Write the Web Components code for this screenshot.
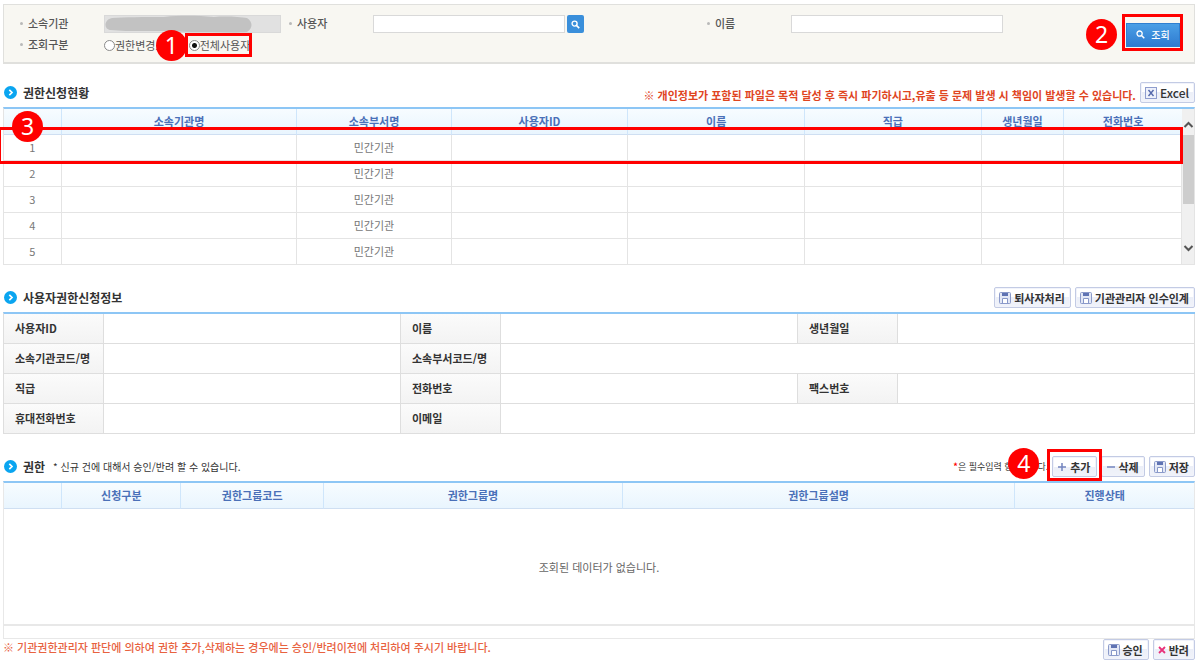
<!DOCTYPE html>
<html lang="ko">
<head>
<meta charset="utf-8">
<title>권한신청현황</title>
<style>
  html, body { margin: 0; background: #fff; }
  body {
    font-family: "Noto Sans CJK KR", "Noto Sans", sans-serif;
    font-size: 11px;
    line-height: 16px;
    color: #333;
  }
</style>
</head>
<body>
<permission-page></permission-page>

<script>
const define = (name, html, setup) => {
  const template = document.createElement('template');
  template.innerHTML = html;
  customElements.define(name, class extends HTMLElement {
    constructor() {
      super();
      this.attachShadow({ mode: 'open' }).append(template.content.cloneNode(true));
    }
    connectedCallback() {
      if (setup) setup(this, this.shadowRoot);
    }
  });
};

const ICONS = {
  save: '<svg width="12" height="12" viewBox="0 0 12 12"><rect x=".5" y=".5" width="11" height="11" rx="1" fill="#e3e8f6" stroke="#8b9aca"/><rect x="3" y="1" width="6" height="3" fill="#5f73b3"/><path d="M3.500 11V6.500h5V11" fill="#fff" stroke="#8797c8"/></svg>',
  excel: '<svg width="12" height="12" viewBox="0 0 12 12"><rect x=".5" y=".5" width="11" height="11" fill="#eef1fb" stroke="#8f9dce"/><path d="M3.500 3l5 6M8.500 3l-5 6" stroke="#5468ab" stroke-width="1.400"/></svg>',
  plus: '<svg width="10" height="12" viewBox="0 0 10 12"><path d="M1 6h8M5 2v8" stroke="#7384be" stroke-width="1.500"/></svg>',
  minus: '<svg width="10" height="12" viewBox="0 0 10 12"><path d="M1 6h8" stroke="#7384be" stroke-width="1.500"/></svg>',
  cross: '<svg width="8" height="12" viewBox="0 0 8 12"><path d="M1 3l6 6M7 3L1 9" stroke="#e8317a" stroke-width="1.800"/></svg>'
};

/* Numbered guide marker: a red frame round the slotted content and a round badge */
define('step-marker', `
  <style>
    :host { display: inline-block; position: relative; --frame: -4px; --x: -30px; --y: -4px; }
    .frame { position: absolute; inset: var(--frame); border: 3px solid #f00; pointer-events: none; z-index: 2; box-sizing: border-box; }
    .badge {
      position: absolute; left: var(--x); top: var(--y); z-index: 3;
      width: 31px; height: 31px; border-radius: 50%;
      background: #f00; color: #fff; text-align: center;
      font: 23px/31px "Noto Sans", sans-serif;
    }
  </style>
  <slot></slot>
  <span class="frame"></span><span class="badge"></span>`,
  (host, root) => { root.querySelector('.badge').textContent = host.getAttribute('step'); });

define('tool-button', `
  <style>
    :host { display: block; }
    button {
      display: flex; align-items: center; gap: 3px; height: 21px; box-sizing: border-box;
      padding: 0 5px 0 4px; border: 1px solid #c3cbe4; border-radius: 2px;
      background: linear-gradient(#fff 50%, #eceff8 50%, #f1f3fa);
      box-shadow: inset 0 0 0 1px #f1f3fb;
      font: bold 11px/16px "Noto Sans CJK KR", sans-serif; color: #333; white-space: nowrap;
    }
    :host([icon=excel]) button { font-weight: 500; font-size: 12px; }
    svg { display: block; }
  </style>
  <button type="button"><span class="icon"></span><slot></slot></button>`,
  (host, root) => { root.querySelector('.icon').innerHTML = ICONS[host.getAttribute('icon')]; });

define('section-head', `
  <style>
    :host { display: flex; align-items: center; gap: 4px; height: 21px; margin: 22px 0 4px; }
    svg { display: block; margin: 0 2px 0 1px; }
    h2 { margin: 0; font-size: 12px; line-height: 18px; font-weight: bold; color: #333; }
    .space { flex: 1; }
  </style>
  <svg width="13" height="13" viewBox="0 0 13 13"><circle cx="6.500" cy="6.500" r="6.500" fill="#0aa5f0"/><path d="M5.300 3.800L8 6.500 5.300 9.200" fill="none" stroke="#fff" stroke-width="1.700"/></svg>
  <h2></h2><slot name="note"></slot><span class="space"></span><slot></slot>`,
  (host, root) => { root.querySelector('h2').textContent = host.getAttribute('heading'); });

define('search-panel', `
  <style>
    :host { display: block; }
    form {
      display: grid; grid-template-columns: 85px 184fr 85px 333fr 85px 335fr 54px;
      grid-template-rows: 18px 18px; row-gap: 3px; align-items: center;
      padding: 10px 14px 8px 15px; background: #f8f7f2;
      border: 1px solid #e0e0dd; border-bottom-width: 2px; color: #555;
    }
    .name { display: flex; align-items: center; gap: 5px; font-weight: 500; padding: 0 0 2px 1px; }
    .name::before { content: ""; width: 3px; height: 3px; border-radius: 50%; background: #b9b9b9; }
    input[type=text] {
      box-sizing: border-box; width: 100%; height: 18px; margin: 0; padding: 0 4px;
      border: 1px solid #d9d9d9; background: #fff; font: inherit;
    }
    .org { position: relative; max-width: 177px; height: 18px; }
    .org input { background: #e1e1e1; display: block; }
    .org svg { position: absolute; left: 0; top: 0; }
    .user { display: flex; gap: 2px; }
    .user input { max-width: 192px; }
    .person { max-width: 212px; }
    .find { width: 17px; height: 18px; flex: none; padding: 0; border: 0; border-radius: 2px; background: #3a8fdb; display: grid; place-items: center; }
    .kinds { display: flex; gap: 13px; white-space: nowrap; }
    .kinds label { display: flex; align-items: center; }
    input[type=radio] { appearance: none; box-sizing: border-box; width: 11px; height: 11px; margin: 0; border: 1px solid #8a8a8a; border-radius: 50%; background: #fff; }
    input[type=radio]:checked { background: radial-gradient(circle, #111 0 2px, #fff 3px); }
    .all { --frame: -4px -2px -4px -4px; --x: -33px; --y: -7px; }
    .go { grid-column: 7; grid-row: 1 / 3; --frame: -9px -3px -4px -4px; --x: -40px; --y: -4px; }
    .submit {
      display: flex; align-items: center; justify-content: center; gap: 6px; width: 54px; height: 24px; padding: 0;
      border: 1px solid #2f7fd0; background: linear-gradient(#4a9fe6, #2f7bd0); color: #fff;
      font: 500 10px/14px "Noto Sans CJK KR", sans-serif;
    }
  </style>
  <form onsubmit="return false">
    <label class="name" for="org">소속기관</label>
    <div class="org"><input id="org" type="text" readonly>
      <svg width="150" height="18" viewBox="0 0 150 18" aria-hidden="true"><path d="M8 3C20 2 40 2 60 2 80 0 95 1 110 2c12-1 26 0 33 1 6 4 6 10 0 14-12 1-35 0-55 0-20-1-35-1-50-1-12 0-22 0-31-1C0 15-1 5 8 3z" fill="#c2c2c2"/></svg>
    </div>
    <label class="name" for="user">사용자</label>
    <div class="user"><input id="user" type="text"><button class="find" type="button" aria-label="사용자 검색"><svg width="9" height="9" viewBox="0 0 9 9"><circle cx="3.600" cy="3.600" r="2.500" fill="none" stroke="#fff" stroke-width="1.400"/><path d="M5.500 5.500L8.200 8.200" stroke="#fff" stroke-width="1.700"/></svg></button></div>
    <label class="name" for="person">이름</label>
    <input class="person" id="person" type="text">
    <step-marker class="go" step="2"><button class="submit" type="submit"><svg width="9" height="9" viewBox="0 0 9 9"><circle cx="3.600" cy="3.600" r="2.600" fill="none" stroke="#fff" stroke-width="1.300"/><path d="M5.500 5.500L8.300 8.300" stroke="#fff" stroke-width="1.500"/></svg>조회</button></step-marker>
    <span class="name">조회구분</span>
    <div class="kinds" role="radiogroup" aria-label="조회구분">
      <label><input type="radio" name="kind">권한변경요청</label>
      <step-marker class="all" step="1"><label><input type="radio" name="kind" checked>전체사용자</label></step-marker>
    </div>
  </form>`);

const GRID_STYLE = `
  table { width: 100%; border-spacing: 0; table-layout: fixed; }
  th, td { box-sizing: border-box; padding: 0 0 2px; text-align: center; }
  th { height: 26px; font-weight: bold; color: #4a70b8; background: linear-gradient(#f7fcff, #e9f5fe); border-right: 1px solid #cfe6fb; border-bottom: 1px solid #cfdff2; }
  th:last-child { border-right: 0; }
`;
const cols = widths => '<colgroup>' + widths.map(w => `<col style="width:${w}%">`).join('') + '</colgroup>';
const heads = names => '<thead><tr>' + names.map(n => n ? `<th scope="col">${n}</th>` : '<th aria-label="번호"></th>').join('') + '</tr></thead>';

define('request-grid', `
  <style>
    :host { display: flex; position: relative; border: 1px solid #e4e4e4; border-top: 2px solid #8dc6f5; }
    ${GRID_STYLE}
    table { flex: 1; min-width: 0; }
    td { height: 26px; color: #777; border-right: 1px solid #e4e4e4; border-bottom: 1px solid #e4e4e4; }
    tbody tr:last-child td { height: 25px; border-bottom: 0; }
    .bar { width: 12px; flex: none; display: flex; flex-direction: column; background: #f0f0f0; }
    .bar button { border: 0; padding: 0; background: none; height: 26px; display: grid; place-items: center; }
    .thumb { height: 69px; background: #cdcdcd; margin-left: 1px; }
    .space { flex: 1; }
    .first { position: absolute; top: 18px; left: -6px; right: 11px; height: 37px; --frame: 0; --x: 14px; --y: -16px; }
  </style>
  <table>${cols([4.9, 20, 13.1, 15, 15, 15, 7, 10])}
    ${heads(['', '소속기관명', '소속부서명', '사용자ID', '이름', '직급', '생년월일', '전화번호'])}
    <tbody>${[1, 2, 3, 4, 5].map(n => `<tr><td>${n}</td><td></td><td>민간기관</td><td></td><td></td><td></td><td></td><td></td></tr>`).join('')}</tbody>
  </table>
  <div class="bar">
    <button type="button" aria-label="위로"><svg width="11" height="14" viewBox="0 0 11 14"><path d="M1.500 12L5.500 8l4 4" fill="none" stroke="#555" stroke-width="2"/></svg></button>
    <div class="thumb"></div><div class="space"></div>
    <button type="button" aria-label="아래로"><svg width="11" height="14" viewBox="0 0 11 14"><path d="M1.500 2L5.500 6l4-4" fill="none" stroke="#555" stroke-width="2"/></svg></button>
  </div>
  <step-marker class="first" step="3"></step-marker>`);

define('user-info', `
  <style>
    :host { display: block; border-top: 2px solid #8dc6f5; border-left: 1px solid #dedede; }
    table { width: 100%; border-spacing: 0; table-layout: fixed; }
    .k { width: 100px; }
    th, td { box-sizing: border-box; height: 30px; padding: 0 0 2px 11px; border-right: 1px solid #dedede; border-bottom: 1px solid #dedede; text-align: left; }
    th { background: linear-gradient(#fbfbfb, #f3f3f3); font-weight: bold; }
  </style>
  <table>
    <colgroup><col class="k"><col><col class="k"><col><col class="k"><col></colgroup>
    <tbody>
      <tr><th scope="row">사용자ID</th><td></td><th scope="row">이름</th><td></td><th scope="row">생년월일</th><td></td></tr>
      <tr><th scope="row">소속기관코드/명</th><td></td><th scope="row">소속부서코드/명</th><td colspan="3"></td></tr>
      <tr><th scope="row">직급</th><td></td><th scope="row">전화번호</th><td></td><th scope="row">팩스번호</th><td></td></tr>
      <tr><th scope="row">휴대전화번호</th><td></td><th scope="row">이메일</th><td colspan="3"></td></tr>
    </tbody>
  </table>`);

define('permission-grid', `
  <style>
    :host { display: block; border: 1px solid #e8e8e8; border-top: 2px solid #8dc6f5; }
    ${GRID_STYLE}
    td { height: 117px; padding: 0; color: #666; border-bottom: 2px solid #e8e8e8; }
    .strip { height: 12px; }
  </style>
  <table>${cols([4.9, 10, 12, 25.1, 33, 15])}
    ${heads(['', '신청구분', '권한그룹코드', '권한그룹명', '권한그룹설명', '진행상태'])}
    <tbody><tr><td colspan="6">조회된 데이터가 없습니다.</td></tr></tbody>
  </table>
  <div class="strip"></div>`);

define('permission-page', `
  <style>
    :host { display: block; padding: 4px 5px 0 3px; }
    .warn { color: #e0451f; font-weight: bold; margin-top: 4px; }
    .top { margin-top: 18px; }
    .note { margin-left: 4px; font-size: 10px; }
    .req { font-size: 9px; }
    .req b { color: #f00; }
    .add { --frame: -7px -5px -4px; --x: -44px; --y: -8px; }
    footer { display: flex; align-items: flex-start; gap: 4px; }
    footer p { flex: 1; margin: 0; color: #e8623f; font-weight: 500; }
  </style>
  <main>
    <search-panel></search-panel>
    <section-head class="top" heading="권한신청현황"><span class="warn">※ 개인정보가 포함된 파일은 목적 달성 후 즉시 파기하시고,유출 등 문제 발생 시 책임이 발생할 수 있습니다.</span><tool-button icon="excel">Excel</tool-button></section-head>
    <request-grid></request-grid>
    <section-head heading="사용자권한신청정보"><tool-button icon="save">퇴사자처리</tool-button><tool-button icon="save">기관관리자 인수인계</tool-button></section-head>
    <user-info></user-info>
    <section-head heading="권한"><span class="note" slot="note">* 신규 건에 대해서 승인/반려 할 수 있습니다.</span><span class="req"><b>*</b>은 필수입력 항목입니다.</span><step-marker class="add" step="4"><tool-button icon="plus">추가</tool-button></step-marker><tool-button icon="minus">삭제</tool-button><tool-button icon="save">저장</tool-button></section-head>
    <permission-grid></permission-grid>
    <footer><p>※ 기관권한관리자 판단에 의하여 권한 추가,삭제하는 경우에는 승인/반려이전에 처리하여 주시기 바랍니다.</p><tool-button icon="save">승인</tool-button><tool-button icon="cross">반려</tool-button></footer>
  </main>`);
</script>
</body>
</html>
